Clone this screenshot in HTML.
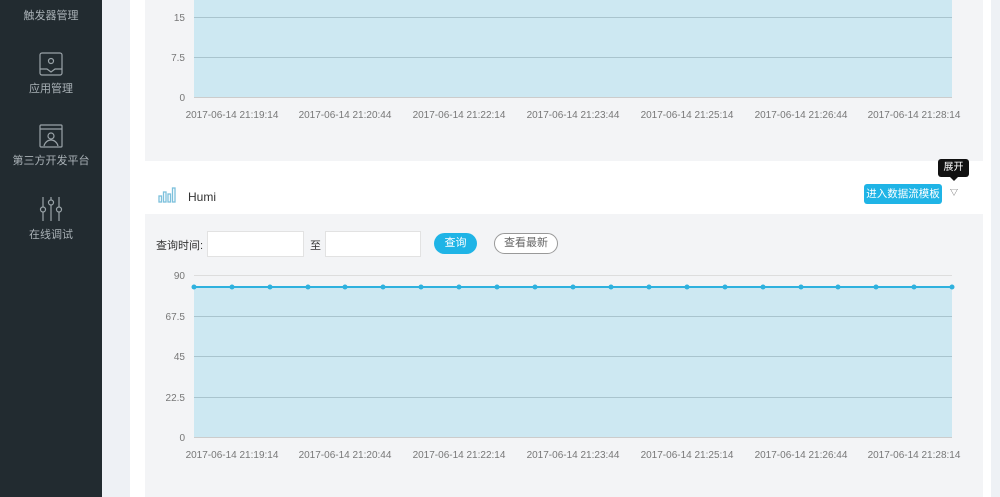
<!DOCTYPE html><html><head><meta charset="utf-8"><style>
body{margin:0;width:1000px;height:497px;overflow:hidden;background:#eef1f5;font-family:"Liberation Sans","Noto Sans CJK SC",sans-serif;position:relative}
.sb{position:absolute;left:0;top:0;width:102px;height:497px;background:#222b30;color:#a9b1b6;font-size:11px}
.it{position:absolute;left:0;width:102px;text-align:center}
.main{position:absolute;left:130px;top:0;width:861px;height:497px;background:#fff}
.g{position:absolute;background:#f3f4f6}
.ab{position:absolute;font-size:11px}
</style></head><body>
<div class="sb">
<div class="it" style="top:7px">触发器管理</div>
<svg style="position:absolute;left:39px;top:52px" width="25" height="25" fill="none" stroke="#9aa3a8" stroke-width="1.2"><rect x="1" y="1" width="22" height="22" rx="2"/><circle cx="12" cy="9" r="2.5"/><path d="M1 17h7l4 3 4-3h7"/></svg>
<div class="it" style="top:80px">应用管理</div>
<svg style="position:absolute;left:39px;top:124px" width="25" height="25" fill="none" stroke="#9aa3a8" stroke-width="1.2"><rect x="1" y="1" width="22" height="22" rx="1"/><path d="M1 5h22"/><circle cx="12" cy="12" r="3"/><path d="M5 22c1-4 4-6 7-6s6 2 7 6"/></svg>
<div class="it" style="top:152px">第三方开发平台</div>
<svg style="position:absolute;left:39px;top:196px" width="25" height="26" fill="none" stroke="#9aa3a8" stroke-width="1.2"><path d="M4 1v10M4 16v9M12 1v3M12 9v16M20 1v10M20 16v9"/><circle cx="4" cy="13.5" r="2.5"/><circle cx="12" cy="6.5" r="2.5"/><circle cx="20" cy="13.5" r="2.5"/></svg>
<div class="it" style="top:226px">在线调试</div>
</div>
<div class="main"></div>
<div class="g" style="left:145px;top:0;width:838px;height:161px"></div>
<div class="g" style="left:145px;top:214px;width:838px;height:283px"></div>
<svg style="position:absolute;left:158px;top:187px" width="18" height="16" fill="none" stroke="#7cc0dc" stroke-width="1.3"><rect x="1" y="9" width="2.5" height="6"/><rect x="5.5" y="5" width="2.5" height="10"/><rect x="10" y="7" width="2.5" height="8"/><rect x="14.5" y="1" width="2.5" height="14"/></svg>
<div class="ab" style="left:188px;top:190px;font-size:12px;color:#333">Humi</div>
<div class="ab" style="left:864px;top:184px;width:78px;height:20px;background:#1fb4e6;color:#fff;border-radius:3px;text-align:center;line-height:20px;font-size:10.5px">进入数据流模板</div>
<div class="ab" style="left:938px;top:159px;width:31px;height:18px;background:#111;color:#fff;border-radius:3px;text-align:center;line-height:18px;font-size:10px">展开</div>
<div class="ab" style="left:950px;top:177px;width:0;height:0;border-left:4px solid transparent;border-right:4px solid transparent;border-top:4px solid #111"></div>
<div class="ab" style="left:950px;top:187px;color:#555;font-size:8px">▽</div>
<div class="ab" style="left:156px;top:237px;color:#333">查询时间:</div>
<div class="ab" style="left:207px;top:231px;width:95px;height:24px;background:#fff;border:1px solid #e2e2e2"></div>
<div class="ab" style="left:310px;top:237px;color:#333">至</div>
<div class="ab" style="left:325px;top:231px;width:94px;height:24px;background:#fff;border:1px solid #e2e2e2"></div>
<div class="ab" style="left:434px;top:233px;width:43px;height:21px;background:#1fb4e6;color:#fff;border-radius:11px;text-align:center;line-height:21px">查询</div>
<div class="ab" style="left:494px;top:233px;width:62px;height:19px;border:1px solid #999;color:#666;border-radius:11px;text-align:center;line-height:19px;background:#fff">查看最新</div>
<svg style="position:absolute;left:0;top:0" width="1000" height="497" font-family="Liberation Sans" font-size="10" fill="#777">
<rect x="194" y="0" width="758" height="97" fill="#cde8f2"/>
<path d="M194 17.5H952M194 57.5H952" stroke="#a9c4ce" stroke-width="1"/>
<path d="M194 97.5H952" stroke="#ccc"/>
<text x="185" y="21" text-anchor="end">15</text><text x="185" y="61" text-anchor="end">7.5</text><text x="185" y="101" text-anchor="end">0</text>
<g text-anchor="middle"><text x="232" y="118">2017-06-14 21:19:14</text><text x="345" y="118">2017-06-14 21:20:44</text><text x="459" y="118">2017-06-14 21:22:14</text><text x="573" y="118">2017-06-14 21:23:44</text><text x="687" y="118">2017-06-14 21:25:14</text><text x="801" y="118">2017-06-14 21:26:44</text><text x="914" y="118">2017-06-14 21:28:14</text></g>
<path d="M194 275.5H952" stroke="#ddd"/>
<rect x="194" y="287" width="758" height="150" fill="#cde8f2"/>
<path d="M194 316.5H952M194 356.5H952M194 397.5H952" stroke="#a9c4ce"/>
<path d="M194 437.5H952" stroke="#ccc"/>
<path d="M194 287H952" stroke="#2fb1de" stroke-width="2"/>
<text x="185" y="279" text-anchor="end">90</text><text x="185" y="320" text-anchor="end">67.5</text><text x="185" y="360" text-anchor="end">45</text><text x="185" y="401" text-anchor="end">22.5</text><text x="185" y="441" text-anchor="end">0</text>
<g text-anchor="middle"><text x="232" y="458">2017-06-14 21:19:14</text><text x="345" y="458">2017-06-14 21:20:44</text><text x="459" y="458">2017-06-14 21:22:14</text><text x="573" y="458">2017-06-14 21:23:44</text><text x="687" y="458">2017-06-14 21:25:14</text><text x="801" y="458">2017-06-14 21:26:44</text><text x="914" y="458">2017-06-14 21:28:14</text></g>
<g fill="#2fb1de"><circle cx="194" cy="287" r="2.5"/><circle cx="232" cy="287" r="2.5"/><circle cx="270" cy="287" r="2.5"/><circle cx="308" cy="287" r="2.5"/><circle cx="345" cy="287" r="2.5"/><circle cx="383" cy="287" r="2.5"/><circle cx="421" cy="287" r="2.5"/><circle cx="459" cy="287" r="2.5"/><circle cx="497" cy="287" r="2.5"/><circle cx="535" cy="287" r="2.5"/><circle cx="573" cy="287" r="2.5"/><circle cx="611" cy="287" r="2.5"/><circle cx="649" cy="287" r="2.5"/><circle cx="687" cy="287" r="2.5"/><circle cx="725" cy="287" r="2.5"/><circle cx="763" cy="287" r="2.5"/><circle cx="801" cy="287" r="2.5"/><circle cx="838" cy="287" r="2.5"/><circle cx="876" cy="287" r="2.5"/><circle cx="914" cy="287" r="2.5"/><circle cx="952" cy="287" r="2.5"/></g>
</svg>
</body></html>
